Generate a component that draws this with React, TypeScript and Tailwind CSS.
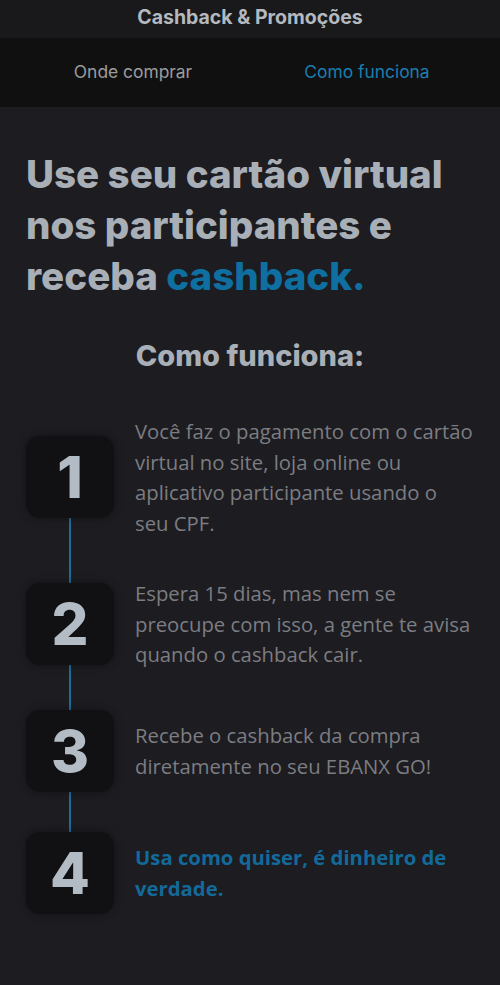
const steps = [
  { n: '1', text: 'Você faz o pagamento com o cartão virtual no site, loja online ou aplicativo participante usando o seu CPF.', highlight: false },
  { n: '2', text: 'Espera 15 dias, mas nem se preocupe com isso, a gente te avisa quando o cashback cair.', highlight: false },
  { n: '3', text: 'Recebe o cashback da compra diretamente no seu EBANX GO!', highlight: false },
  { n: '4', text: 'Usa como quiser, é dinheiro de verdade.', highlight: true },
];

export default function App() {
  return (
    <div className="min-h-[985px] w-[500px] bg-[#1c1c21] font-['Inter',sans-serif]">
      <header className="h-[38px] bg-[#19191b] flex items-center justify-center">
        <h1 className="text-[19.5px] font-bold text-[#b3b9bf] -mt-[3px]">Cashback &amp; Promoções</h1>
      </header>

      <nav className="h-[69px] bg-[#101011] grid grid-cols-2 px-4 items-center text-[17.4px]">
        <button className="text-center text-[#9c9c9c]">Onde comprar</button>
        <button className="text-center text-[#1b7eae]">Como funciona</button>
      </nav>

      <main className="px-[26px]">
        <h2 className="pt-[42px] text-[38.5px] leading-[51px] font-extrabold text-[#a8afb7]">
          Use seu cartão virtual nos participantes e receba <span className="text-[#0f6fa0]">cashback.</span>
        </h2>

        <h3 className="mt-[36px] text-center text-[29px] font-extrabold text-[#a8afb7] leading-[36px]">Como funciona:</h3>

        <ol className="relative mt-[42px] flex flex-col gap-[40px]">
          <div className="absolute left-[43px] top-[60px] bottom-[40px] w-[2px] bg-[#1b6e98]" />
          {steps.map((s) => (
            <li key={s.n} className="relative flex items-center gap-[21px]">
              <div className="w-[88px] h-[82px] shrink-0 rounded-[14px] bg-[#111113] shadow-[0_0_8px_rgba(0,0,0,0.35)] flex items-center justify-center">
                <span className="text-[58px] font-extrabold text-[#b3bcc4] leading-none">{s.n}</span>
              </div>
              <p
                className={
                  s.highlight
                    ? "font-['Open_Sans',sans-serif] text-[20.3px] leading-[30.5px] font-bold text-[#136a9a] w-[338px]"
                    : "font-['Open_Sans',sans-serif] text-[20.3px] leading-[30.5px] text-[#7c7d81] w-[338px]"
                }
              >
                {s.text}
              </p>
            </li>
          ))}
        </ol>
      </main>
    </div>
  );
}
